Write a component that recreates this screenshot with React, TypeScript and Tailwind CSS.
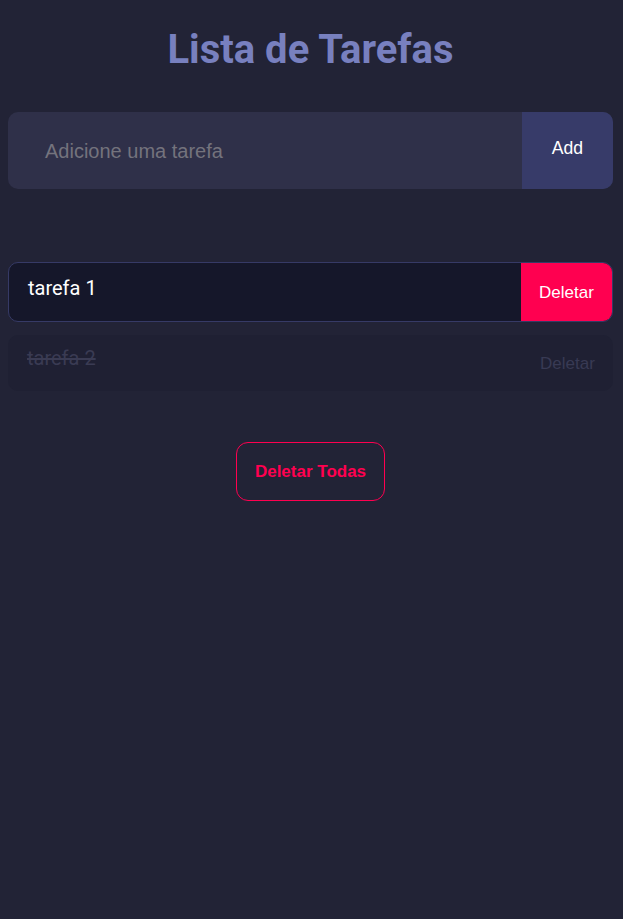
import React from "react";

export default function App() {
  return (
    <div className="min-h-[919px] w-full bg-[#222336] pl-2 pr-[10px] pt-[27px]" style={{ fontFamily: "Roboto, sans-serif" }}>
      <h1 className="text-center text-[40px] font-bold leading-[46px] text-[#7880bf] font-['Roboto',sans-serif]">
        Lista de Tarefas
      </h1>
      <div className="mt-[39px] flex h-[77px] overflow-hidden rounded-[10px] bg-[#2f3049]">
        <div className="flex flex-1 items-center pl-[37px] font-['Liberation_Sans',Arial,sans-serif] text-[20px] text-[#74737d]">
          Adicione uma tarefa
        </div>
        <div className="flex w-[91px] items-center justify-center bg-[#373b69] pb-[4px] font-['Liberation_Sans',Arial,sans-serif] text-[17.6px] text-white">
          Add
        </div>
      </div>
      <div className="mt-[73px] flex h-[60px] overflow-hidden rounded-[10px] border border-[#363a66] bg-[#15172a]">
        <div className="flex-1 pl-[19px] pt-[11px] font-['Roboto',sans-serif] text-[20px] leading-[28px] text-white">tarefa 1</div>
        <div className="flex w-[91px] items-center justify-center pt-[1px] bg-[#ff0050] font-['Liberation_Sans',Arial,sans-serif] text-[17px] text-white">
          Deletar
        </div>
      </div>
      <div className="mt-[13px] flex h-[56px] overflow-hidden rounded-[10px] bg-[#1f2033]">
        <div className="flex-1 pl-[19px] pt-[9px] font-['Roboto',sans-serif] text-[20px] leading-[28px] text-[#3a3b53] line-through">tarefa 2</div>
        <div className="flex w-[91px] items-center justify-center pt-[9px] pb-[8px] font-['Liberation_Sans',Arial,sans-serif] text-[17px] text-[#383a54]">
          Deletar
        </div>
      </div>
      <div className="mt-[51px] flex justify-center">
        <div className="flex h-[59px] w-[149px] items-center justify-center rounded-[12px] border border-[#ff0050] font-['Liberation_Sans',Arial,sans-serif] text-[17px] font-bold text-[#ff0050]">
          Deletar Todas
        </div>
      </div>
    </div>
  );
}
